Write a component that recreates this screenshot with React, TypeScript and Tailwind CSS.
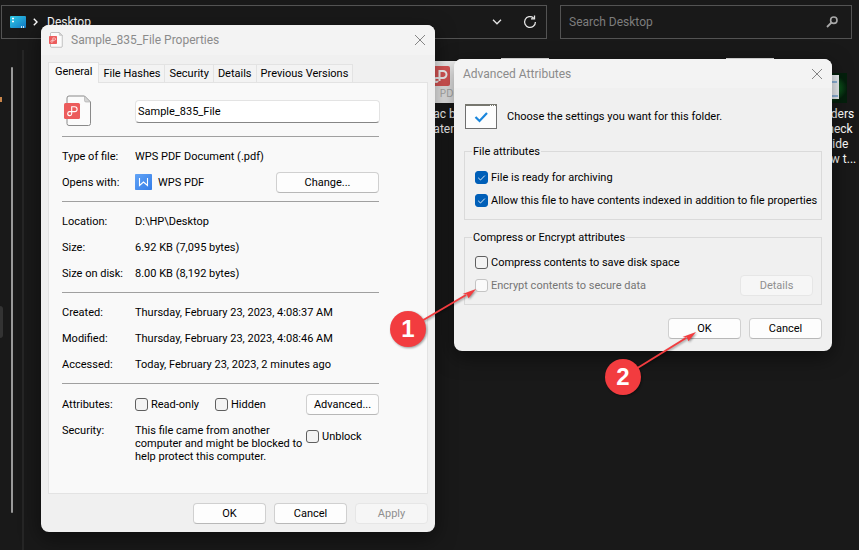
import type { ReactNode } from "react";
import { clsx } from "clsx";

const tabs = ["General", "File Hashes", "Security", "Details", "Previous Versions"];

const sizes = [
  { label: "Location:", value: "D:\\HP\\Desktop" },
  { label: "Size:", value: "6.92 KB (7,095 bytes)" },
  { label: "Size on disk:", value: "8.00 KB (8,192 bytes)" },
];

const dates = [
  { label: "Created:", value: "Thursday, February 23, 2023, 4:08:37 AM" },
  { label: "Modified:", value: "Thursday, February 23, 2023, 4:08:46 AM" },
  { label: "Accessed:", value: "Today, February 23, 2023, 2 minutes ago" },
];

function DialogButton({
  children,
  className,
  disabled,
}: {
  children: ReactNode;
  className?: string;
  disabled?: boolean;
}) {
  return (
    <button
      type="button"
      disabled={disabled}
      className={clsx(
        "h-[21px] shrink-0 rounded border text-center leading-[19px]",
        disabled
          ? "border-[#e6e6e6] bg-[#f6f6f6] text-[#8f8f8f]"
          : "border-[#d0d0d0] border-b-[#b8b8b8] bg-[#fdfdfd] text-black",
        className ?? "w-[73px]",
      )}
    >
      {children}
    </button>
  );
}

function Check({
  id,
  label,
  checked,
  disabled,
}: {
  id: string;
  label: string;
  checked?: boolean;
  disabled?: boolean;
}) {
  return (
    <div className="flex items-center gap-[3px]">
      <span className="relative size-[13px] shrink-0">
        <input
          id={id}
          type="checkbox"
          defaultChecked={checked}
          disabled={disabled}
          className="peer block size-[13px] appearance-none rounded-[3px] border border-[#5f5f5f] bg-[#f3f3f3] checked:border-[#005fb8] checked:bg-[#005fb8] disabled:border-[#c4c4c4] disabled:bg-[#fafafa]"
        />
        <svg
          viewBox="0 0 13 13"
          className="pointer-events-none absolute inset-0 hidden size-[13px] peer-checked:block"
          fill="none"
          stroke="#d8e8f6"
        >
          <path d="M3.2 6.8 5.5 9 9.8 4.6" />
        </svg>
      </span>
      <label htmlFor={id} className={clsx("whitespace-nowrap", disabled && "text-[#757575]")}>
        {label}
      </label>
    </div>
  );
}

function CloseButton() {
  return (
    <button type="button" aria-label="Close" className="p-[3px]">
      <svg viewBox="0 0 12 12" className="size-3" stroke="#858585" fill="none">
        <path d="M1 1 11 11M11 1 1 11" />
      </svg>
    </button>
  );
}

function PdfFileIcon({ className }: { className: string }) {
  return (
    <svg viewBox="0 0 28 32" className={className}>
      <path
        d="M5 1h15.5l6 6v21.5a2 2 0 0 1-2 2H5a2 2 0 0 1-2-2V3a2 2 0 0 1 2-2Z"
        fill="#fbfbfb"
        stroke="#8a8a8a"
      />
      <path d="M20.5 1v4.500a1.500 1.500 0 0 0 1.500 1.500h4.500Z" fill="#d4d4d4" stroke="#a8a8a8" strokeWidth=".6" />
      <rect x="0" y="8" width="16" height="16" rx="1.5" fill="#ec5c5c" />
      <path
        d="M7.7 18.800v-7h3a2.400 2.400 0 0 1 0 4.800H5.800a2 2 0 1 0 1.900 2.200"
        fill="none"
        stroke="#fff"
        strokeWidth="1.1"
      />
    </svg>
  );
}

function WpsIcon() {
  return (
    <svg viewBox="0 0 17 16" className="h-4 w-[17px]">
      <defs>
        <linearGradient id="wps" x1="0" y1="0" x2="1" y2="1">
          <stop offset="0" stopColor="#62a4f6" />
          <stop offset="1" stopColor="#347de8" />
        </linearGradient>
      </defs>
      <rect width="17" height="16" rx=".8" fill="url(#wps)" />
      <path d="M4.5 4v7.5L8.500 8l4 3.500V4" fill="none" stroke="#fff" strokeWidth="1.1" />
    </svg>
  );
}

function Row({ label, children }: { label: string; children: ReactNode }) {
  return (
    <div className="flex h-[26px] items-center">
      <dt className="w-[73px] shrink-0">{label}</dt>
      <dd className="flex flex-1 items-center whitespace-nowrap">{children}</dd>
    </div>
  );
}

function AddressBar() {
  return (
    <header className="flex gap-[13px] pt-[5px] pr-[7px] pl-px">
      <div className="flex h-[34px] flex-1 items-center border border-[#535353] pr-[9px] pl-2 text-white">
        <svg viewBox="0 0 16 12" className="h-3 w-4">
          <defs>
            <linearGradient id="desk" x1="0" y1="0" x2="1" y2="1">
              <stop offset="0" stopColor="#2fcbe6" />
              <stop offset="1" stopColor="#1277c4" />
            </linearGradient>
          </defs>
          <rect width="16" height="12" rx="1" fill="url(#desk)" />
          <path d="M2 2.500h2M2 5.500h2M11 11h1M13 11h1" stroke="#fff" strokeWidth="1.5" />
        </svg>
        <svg viewBox="0 0 5 8" className="ml-[7px] h-2 w-[5px]" fill="none" stroke="#fff" strokeWidth="1.4">
          <path d="M.8.8 4 4 .8 7.200" />
        </svg>
        <a href="#desktop" className="pl-[9px]">
          Desktop
        </a>
        <button type="button" aria-label="Recent locations" className="ml-auto">
          <svg viewBox="0 0 10 6" className="h-1.5 w-2.5" fill="none" stroke="#e6e6e6" strokeWidth="1.3">
            <path d="M1 .8 5 4.800 9 .8" />
          </svg>
        </button>
        <button type="button" aria-label="Refresh" className="ml-[21px]">
          <svg viewBox="0 0 14 14" className="size-3.5" fill="none" stroke="#e6e6e6" strokeWidth="1.3">
            <path d="M12.400 7A5.400 5.400 0 1 1 10.500 2.900M8 3.800h3.500V.5" />
          </svg>
        </button>
      </div>
      <div className="flex h-[34px] w-[292px] items-center border border-[#535353] pr-[13px] pl-2">
        <input
          type="search"
          aria-label="Search Desktop"
          placeholder="Search Desktop"
          className="min-w-0 flex-1 bg-transparent text-white placeholder:text-[#7d7d7d]"
        />
        <svg viewBox="0 0 12 12" className="size-3" fill="none" stroke="#a8a8a8">
          <circle cx="7.800" cy="4.200" r="3.200" strokeWidth="1.6" />
          <path d="M5.500 6.500 1 11" strokeWidth="1.8" />
        </svg>
      </div>
    </header>
  );
}

function Explorer() {
  return (
    <div className="flex flex-1">
      <nav aria-label="Folders" className="mt-[11px] flex w-6 justify-between border-r-2 border-[#262626]">
        <div className="flex w-[3px] flex-col">
          <span className="mt-[47px] h-[5px] w-0.5 bg-[#c9854a]" />
          <span className="mt-[204px] h-8 rounded-r bg-[#333333]" />
        </div>
        <div className="mt-[17px] mr-[9px] h-[446px] w-0.5 rounded bg-[#9a9a9a]" />
      </nav>
      <ul className="-mr-1 ml-auto grid w-[451px] grid-cols-6 pt-[19px] text-center leading-[15px] text-white">
        <li className="flex flex-col items-center">
          <span className="mt-[3px] mb-1 flex h-[42px] w-12 flex-col items-center bg-[#f4f4f4] pt-[5px]">
            <svg viewBox="0 0 20 20" className="mr-5 size-5">
              <rect width="20" height="20" rx="2" fill="#e45a5a" />
              <path
                d="M9.500 15V5h3.500a3.500 3.500 0 0 1 0 7H6a2 2 0 1 0 2 3"
                fill="none"
                stroke="#fff"
                strokeWidth="2"
              />
            </svg>
            <span className="font-[Inter,sans-serif] text-[10px] leading-[14px] text-[#b5b5b5]">PDF</span>
          </span>
          <span>Mac batte</span>
          <span>Patentes</span>
        </li>
        <li className="flex justify-center">
          <span className="h-11 w-12 bg-[#e8e8e8]" />
        </li>
        <li />
        <li />
        <li className="flex justify-center">
          <span className="h-11 w-12 bg-[#e8e8e8]" />
        </li>
        <li className="flex flex-col items-center">
          <svg viewBox="0 0 44 30" className="mt-[15px] mb-1 h-[30px] w-11">
            <defs>
              <radialGradient id="glow">
                <stop offset="0" stopColor="#18b034" />
                <stop offset="1" stopColor="#04200c" />
              </radialGradient>
            </defs>
            <rect width="44" height="30" fill="url(#glow)" />
            <rect x="20" y="2" width="16" height="24" fill="#f2f6fa" />
            <path d="M29 9h5M26 23h9" stroke="#3b83d0" strokeWidth="1.2" />
          </svg>
          <span>for Finders</span>
          <span>and check</span>
          <span>on guide</span>
          <span>and how t...</span>
        </li>
      </ul>
    </div>
  );
}

function PropertiesDialog() {
  return (
    <section
      aria-label="Sample_835_File Properties"
      className="absolute top-[25px] left-[41px] w-[394px] overflow-hidden rounded-lg bg-[#f0f0f0] pb-2 text-[11px] leading-[13px] text-black shadow-[0_6px_20px_rgba(0,0,0,0.5)]"
    >
      <div className="flex h-[30px] items-center bg-[#f3f3f3] pr-[6px] pl-2">
        <PdfFileIcon className="h-4 w-3.5" />
        <h1 className="mr-auto ml-2 text-xs text-[#8b8b8b]">Sample_835_File Properties</h1>
        <CloseButton />
      </div>

      <div className="mx-[7px] mt-[7px]">
        <div role="tablist" className="flex items-end">
          {tabs.map((tab, i) => (
            <button
              key={tab}
              type="button"
              role="tab"
              aria-selected={i === 0}
              className={clsx(
                "border border-b-0 border-[#e3e3e3] whitespace-nowrap",
                i === 0
                  ? "-mb-px h-[21px] bg-[#f9f9f9] px-[6px] pb-[3px]"
                  : "h-[18px] border-l-0 bg-[#f3f3f3] px-1",
              )}
            >
              {tab}
            </button>
          ))}
        </div>

        <div className="border border-[#e3e3e3] bg-[#f9f9f9] pt-3 pr-12 pb-[30px] pl-[13px]">
          <div className="flex h-8 items-center pl-0.5">
            <PdfFileIcon className="h-8 w-7" />
            <input
              aria-label="File name"
              defaultValue="Sample_835_File"
              className="-mr-px ml-[43px] h-[23px] min-w-0 flex-1 rounded-sm border border-[#e3e3e3] border-b-[#868686] bg-white px-0.5"
            />
          </div>

          <dl className="mt-[9px] border-t border-[#a0a0a0] py-[6px]">
            <Row label="Type of file:">WPS PDF Document (.pdf)</Row>
            <Row label="Opens with:">
              <WpsIcon />
              <span className="mr-auto ml-[6px]">WPS PDF</span>
              <DialogButton className="w-[103px]">Change...</DialogButton>
            </Row>
          </dl>
          <dl className="border-t border-[#a0a0a0] py-[6px]">
            {sizes.map((r) => (
              <Row key={r.label} label={r.label}>
                {r.value}
              </Row>
            ))}
          </dl>
          <dl className="border-t border-[#a0a0a0] py-[6px]">
            {dates.map((r) => (
              <Row key={r.label} label={r.label}>
                {r.value}
              </Row>
            ))}
          </dl>
          <dl className="border-t border-[#a0a0a0] pt-[7px]">
            <Row label="Attributes:">
              <div className="w-20">
                <Check id="read-only" label="Read-only" />
              </div>
              <Check id="hidden" label="Hidden" />
              <span className="ml-auto flex">
                <DialogButton>Advanced...</DialogButton>
              </span>
            </Row>
            <div className="mt-[7px] flex">
              <dt className="w-[73px] shrink-0">Security:</dt>
              <dd className="flex flex-1">
                <p className="w-[171px]">
                  This file came from another
                  <br />
                  computer and might be blocked to
                  <br />
                  help protect this computer.
                </p>
                <div className="pt-[6px]">
                  <Check id="unblock" label="Unblock" />
                </div>
              </dd>
            </div>
          </dl>
        </div>
      </div>

      <div className="mt-[9px] flex justify-end gap-2 pr-[7px]">
        <DialogButton>OK</DialogButton>
        <DialogButton>Cancel</DialogButton>
        <DialogButton disabled>Apply</DialogButton>
      </div>
    </section>
  );
}

function AdvancedDialog() {
  return (
    <section
      aria-label="Advanced Attributes"
      className="absolute top-[59px] left-[454px] w-[378px] overflow-hidden rounded-lg bg-[#f0f0f0] pb-3 text-[11px] leading-[13px] text-black shadow-[0_6px_20px_rgba(0,0,0,0.5)]"
    >
      <div className="flex h-[29px] items-center bg-[#f3f3f3] pr-[6px] pl-[9px]">
        <h2 className="mr-auto text-xs text-[#8b8b8b]">Advanced Attributes</h2>
        <CloseButton />
      </div>

      <div className="px-[10px] pt-4">
        <div className="flex items-center gap-[10px] pl-px">
          <svg viewBox="0 0 32 25" className="h-[25px] w-8">
            <rect x=".5" y=".5" width="31" height="24" fill="#fdfdfd" stroke="#6f6f6f" />
            <path d="M0 1h32" stroke="#77776f" strokeWidth="2" />
            <path d="M25 1.500h1M27 1.500h1M29 1.500h1" stroke="#fff" />
            <path d="m10.500 13 4 4L22 9" fill="none" stroke="#1a86dc" strokeWidth="2.2" />
          </svg>
          <p>Choose the settings you want for this folder.</p>
        </div>

        <fieldset className="mt-4 min-w-0 border border-[#dadada] px-[10px] pb-3">
          <legend className="-ml-[3px] px-px">File attributes</legend>
          <div className="mt-[13px] flex flex-col gap-[10px]">
            <Check id="archiving" label="File is ready for archiving" checked />
            <Check
              id="indexed"
              label="Allow this file to have contents indexed in addition to file properties"
              checked
            />
          </div>
        </fieldset>

        <fieldset className="mt-[11px] min-w-0 border border-[#dadada] pr-2 pb-2 pl-[10px]">
          <legend className="-ml-[3px] px-px">Compress or Encrypt attributes</legend>
          <div className="mt-[12px]">
            <Check id="compress" label="Compress contents to save disk space" />
            <div className="mt-[6px] flex items-center justify-between">
              <Check id="encrypt" label="Encrypt contents to secure data" disabled />
              <DialogButton disabled>Details</DialogButton>
            </div>
          </div>
        </fieldset>

        <div className="mt-[13px] flex justify-end gap-2">
          <DialogButton>OK</DialogButton>
          <DialogButton>Cancel</DialogButton>
        </div>
      </div>
    </section>
  );
}

// numbered disc with an arrow running up and to the right; dx, dy lengthen the arrow
function Callout({ n, dx, dy, className }: { n: number; dx: number; dy: number; className: string }) {
  return (
    <div className={clsx("pointer-events-none absolute", className)}>
      <svg viewBox="0 0 96 66" className="h-[66px] w-24 drop-shadow-[1px_1px_1px_rgba(0,0,0,0.4)]">
        <path d={`M19 46 ${77 + dx} ${12 - dy}`} stroke="#f23c3f" strokeWidth="2" />
        <path
          d="m87 6-7.500 9.300-1.700-3.700-4.300-.5Z"
          transform={`translate(${dx} ${-dy})`}
          fill="#f23c3f"
        />
        <circle cx="19" cy="46" r="18" fill="#f23c3f" />
      </svg>
      <span className="absolute top-7 left-px w-9 text-center font-['Liberation_Sans',sans-serif] text-2xl leading-9 font-bold text-white">
        {n}
      </span>
    </div>
  );
}

export default function App() {
  return (
    <main className="relative flex min-h-screen flex-col overflow-hidden bg-[#191919] font-[Roboto,sans-serif] text-xs">
      <AddressBar />
      <Explorer />
      <PropertiesDialog />
      <AdvancedDialog />
      <Callout n={1} dx={0} dy={0} className="top-[283px] left-[389px]" />
      <Callout n={2} dx={5} dy={5} className="top-[331px] left-[604px]" />
    </main>
  );
}
